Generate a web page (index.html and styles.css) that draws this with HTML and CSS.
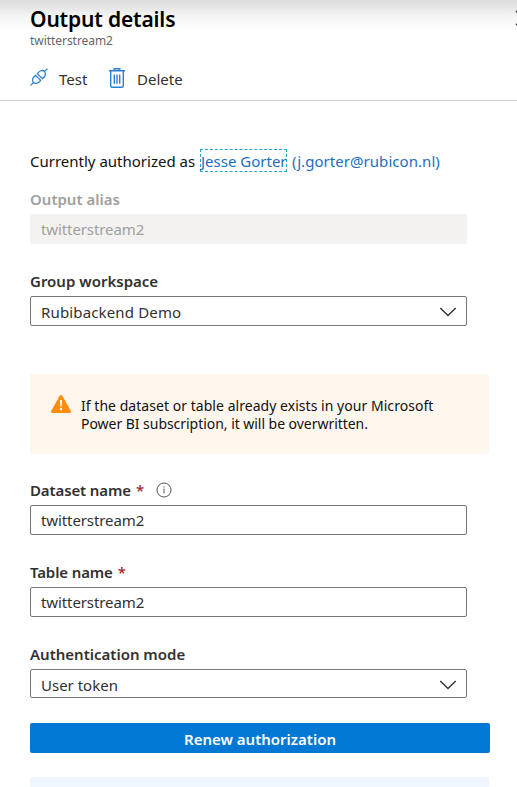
FILE: index.html
```html
<!DOCTYPE html>
<html lang="en">
<head>
<meta charset="utf-8">
<title>Output details</title>
<link rel="stylesheet" href="styles.css">
</head>
<body>
<main class="panel">
  <header class="header">
    <h1 class="title"><span>Output details</span></h1>
    <p class="subtitle"><span>twitterstream2</span></p>
    <svg class="close" width="16" height="16" viewBox="0 0 16 16"><path d="M1 1 15 15M1 15 15 1" fill="none" stroke="#333" stroke-width="1.4"/></svg>
    <nav class="toolbar">
      <button class="command test">
        <svg width="18" height="18" viewBox="0 0 20 20" fill="none" stroke="#2b7fd0" stroke-width="1.4" stroke-linecap="round"><path d="M1 19 3.8 16.2M16.2 3.8 19 1"/><path d="M3.8 16.2C1.7 13.6 3.1 10.2 6.2 8.2L11.8 13.8C9.8 16.9 6.4 18.3 3.8 16.2Z"/><path d="M16.2 3.8C18.3 6.4 16.9 9.8 13.8 11.8L8.2 6.2C10.2 3.1 13.6 1.7 16.2 3.8Z"/></svg>
        <span>Test</span>
      </button>
      <button class="command delete">
        <svg width="16" height="20" viewBox="0 0 16 20" fill="none" stroke="#2b7fd0" stroke-width="1.4"><path d="M0 2.8H16M5.2 2.8V.8H10.8V2.8M1.7 2.8V17.8Q1.7 19.3 3.2 19.3H12.8Q14.3 19.3 14.3 17.8V2.8M5.3 6.5V15.7M8 6.5V15.7M10.7 6.5V15.7"/></svg>
        <span>Delete</span>
      </button>
    </nav>
  </header>
  <form class="content">
    <p class="account"><span class="lead">Currently authorized as</span><a class="user">Jesse Gorter</a><a class="email">(j.gorter@rubicon.nl)</a></p>
    <section class="field disabled">
      <label class="label"><span>Output alias</span></label>
      <div class="box text"><span>twitterstream2</span></div>
    </section>
    <section class="field workspace">
      <label class="label"><span>Group workspace</span></label>
      <div class="box"><span class="workspace-name">Rubibackend Demo</span><svg class="chevron" width="18" height="10" viewBox="0 0 18 10"><path d="M1.3 1 9 8.6 16.7 1" fill="none" stroke="#323130" stroke-width="1.4"/></svg></div>
    </section>
    <aside class="warning">
      <svg width="20" height="18" viewBox="0 0 20 18"><path d="M8.7.8Q10-.8 11.3.8L19.8 16Q20.4 18 18.6 18H1.4Q-.4 18 .2 16Z" fill="#ff8c0a"/><path d="M9 5H11L10.7 11.4H9.3Z" fill="#fff"/><circle cx="10" cy="14" r="1.2" fill="#fff"/></svg>
      <p><span class="warning-first">If the dataset or table already exists in your Microsoft</span><br><span class="warning-second">Power BI subscription, it will be overwritten.</span></p>
    </aside>
    <section class="field">
      <label class="label"><span class="tight">Dataset name</span><b class="required">*</b><svg class="info" width="16" height="16" viewBox="0 0 16 16" fill="none" stroke="#555"><circle cx="8" cy="8" r="7"/><path d="M8 6.5V11.5M8 4.2V5.4"/></svg></label>
      <div class="box text"><span>twitterstream2</span></div>
    </section>
    <section class="field">
      <label class="label"><span class="tight">Table name</span><b class="required">*</b></label>
      <div class="box text"><span>twitterstream2</span></div>
    </section>
    <section class="field auth">
      <label class="label"><span>Authentication mode</span></label>
      <div class="box"><span>User token</span><svg class="chevron" width="18" height="10" viewBox="0 0 18 10"><path d="M1.3 1 9 8.6 16.7 1" fill="none" stroke="#323130" stroke-width="1.4"/></svg></div>
    </section>
    <button class="renew" type="button"><span>Renew authorization</span></button>
    <div class="notice"></div>
  </form>
</main>
</body>
</html>
```
FILE: styles.css
```css
* { box-sizing: border-box; }
body {
  margin: 0;
  background: #fff;
  color: #323130;
  font: 15px/20px "Noto Sans", "Open Sans", sans-serif;
}
h1, p { margin: 0; }
span, a { white-space: nowrap; }
.panel { height: 787px; overflow: hidden; }
.header {
  position: relative;
  height: 101px;
  padding: 6px 0 0 30px;
  border-bottom: 1px solid #d0d0d0;
  background: linear-gradient(#dcdcdc, #e0e0e0 4px, #f3f3f3 15px, #fff 31px);
}
.title { height: 26px; color: #000; font-size: 21px; line-height: 26px; font-weight: 600; letter-spacing: -.15px; }
.subtitle { height: 18px; color: #666; font-size: 12px; line-height: 18px; }
.subtitle span { letter-spacing: -.05px; }
.close { position: absolute; left: 515px; top: 10px; }
.toolbar { display: flex; height: 30px; margin-top: 14px; }
.command { display: flex; align-items: flex-start; padding: 0; border: 0; background: none; color: #323130; font: inherit; }
.command span { padding-top: 5px; }
.test { width: 79px; gap: 11px; }
.test svg { margin-top: 4px; }
.delete { gap: 12px; }
.delete svg { margin-top: 4px; }
.content { padding: 48px 27px 0 30px; }
.account { display: flex; height: 41px; color: #111; }
.lead { width: 170px; padding-top: 2px; }
.user { width: 87px; height: 23px; padding-top: 1px; border: 1px dashed #22a7c9; color: #1b6ec2; line-height: 20px; margin-right: 5px; }
.email { color: #1b6ec2; padding-top: 2px; letter-spacing: .05px; }
.field { height: 82px; width: 437px; }
.label { display: flex; height: 24px; font-weight: 600; line-height: 18px; }
.tight { letter-spacing: -.12px; }
.box { display: flex; justify-content: space-between; height: 30px; padding: 5px 9px 0 10px; border: 1px solid #777; border-radius: 2px; }
.text { padding-top: 4px; letter-spacing: -.1px; }
.workspace-name { letter-spacing: .15px; }
.chevron { margin-top: 5px; }
.disabled { color: #a19f9d; }
.disabled .box { border-color: #f3f2f1; background: #f3f2f1; }
.workspace { height: 102px; }
.warning { display: flex; gap: 10px; width: 459px; height: 80px; margin-bottom: 27px; padding: 23px 0 0 21px; border-radius: 2px; background: #fff6ee; color: #111; font-size: 14px; line-height: 18px; }
.warning svg { margin-top: -2px; }
.warning-first { letter-spacing: .04px; }
.warning-second { letter-spacing: -.04px; }
.required { margin-left: 5px; color: #a4262c; font-weight: 500; }
.info { margin: 1px 0 0 12px; }
.auth { height: 78px; }
.auth .box { height: 29px; }
.renew { display: block; width: 460px; height: 30px; padding: 1px 0 0; border: 0; border-radius: 2px; background: #0078d4; color: #fff; font: 600 15px/20px "Noto Sans", "Open Sans", sans-serif; }
.notice { width: 459px; height: 30px; margin-top: 24px; border-radius: 2px; background: #f0f6ff; }
```
